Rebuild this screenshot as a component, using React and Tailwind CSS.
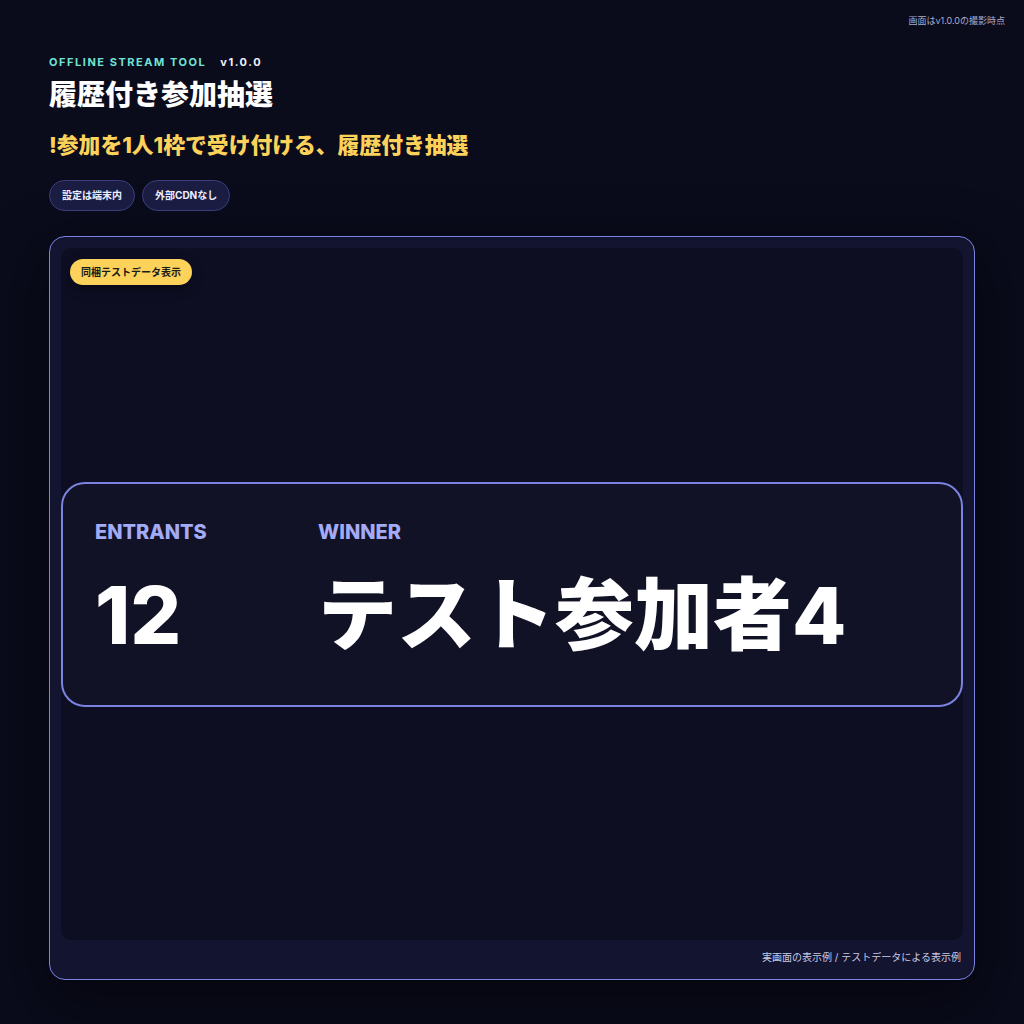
export default function App() {
  const font = { fontFamily: '"Inter", "Noto Sans CJK JP", sans-serif' };
  return (
    <div className="min-h-[1024px] w-full bg-[#0a0b1b] text-white" style={font}>
      <div className="flex justify-end px-[19px] pt-[15px]">
        <span className="text-[9px] leading-[12px] text-[#a9abcf]">画面はv1.0.0の撮影時点</span>
      </div>
      <div className="px-[49px] pt-[28px]">
        <div className="flex items-center gap-[14px] text-[11px] font-bold leading-[14px] tracking-[0.14em]">
          <span className="text-[#6fe3d6]">OFFLINE STREAM TOOL</span>
          <span className="text-[#eef0ff]">v1.0.0</span>
        </div>
        <h1 className="mt-[8px] text-[28px] font-extrabold leading-[36px] text-white">履歴付き参加抽選</h1>
        <p className="mt-[18px] text-[21.8px] font-extrabold leading-[28px] text-[#fcd25a]">!参加を1人1枠で受け付ける、履歴付き抽選</p>
        <div className="mt-[21px] flex gap-[7px]">
          <span className="flex h-[31px] items-center rounded-full border border-[#3b3e7c] bg-[#1b1c42] px-[12px] text-[10px] font-bold text-[#eceefe]">設定は端末内</span>
          <span className="flex h-[31px] items-center rounded-full border border-[#3b3e7c] bg-[#1b1c42] px-[12px] text-[10px] font-bold text-[#eceefe]">外部CDNなし</span>
        </div>
        <div className="mt-[25px] flex h-[744px] w-[926px] flex-col rounded-[16px] border-[1.5px] border-[#7b82e0] bg-[#131430] p-[11px] shadow-[0_20px_60px_rgba(0,0,0,0.5)]">
          <div className="relative flex flex-1 flex-col justify-center rounded-[10px] bg-[#0d0e22]">
            <span className="absolute left-[9px] top-[11px] flex h-[26px] items-center rounded-full bg-[#fcd25a] px-[11px] text-[10px] font-bold text-[#1a1a1a] shadow-[0_4px_12px_rgba(0,0,0,0.4)]">同梱テストデータ表示</span>
            <div className="flex h-[225px] rounded-[24px] border-2 border-[#7b82e0] bg-[#111226] px-[32px] pt-[36px]">
              <div className="w-[223px]">
                <div className="text-[20px] font-extrabold leading-[24px] text-[#a3aaf6]">ENTRANTS</div>
                <div className="mt-[29px] text-[80px] font-extrabold leading-[84px] text-white">12</div>
              </div>
              <div>
                <div className="text-[20px] font-extrabold leading-[24px] text-[#a3aaf6]">WINNER</div>
                <div className="mt-[29px] whitespace-nowrap text-[79px] font-extrabold leading-[84px] text-white">テスト参加者4</div>
              </div>
            </div>
          </div>
          <div className="flex justify-end pr-[2px] pt-[10px] pb-[4px]">
            <span className="text-[10px] leading-[14px] text-[#c9cbe3]">実画面の表示例 / テストデータによる表示例</span>
          </div>
        </div>
      </div>
    </div>
  );
}
